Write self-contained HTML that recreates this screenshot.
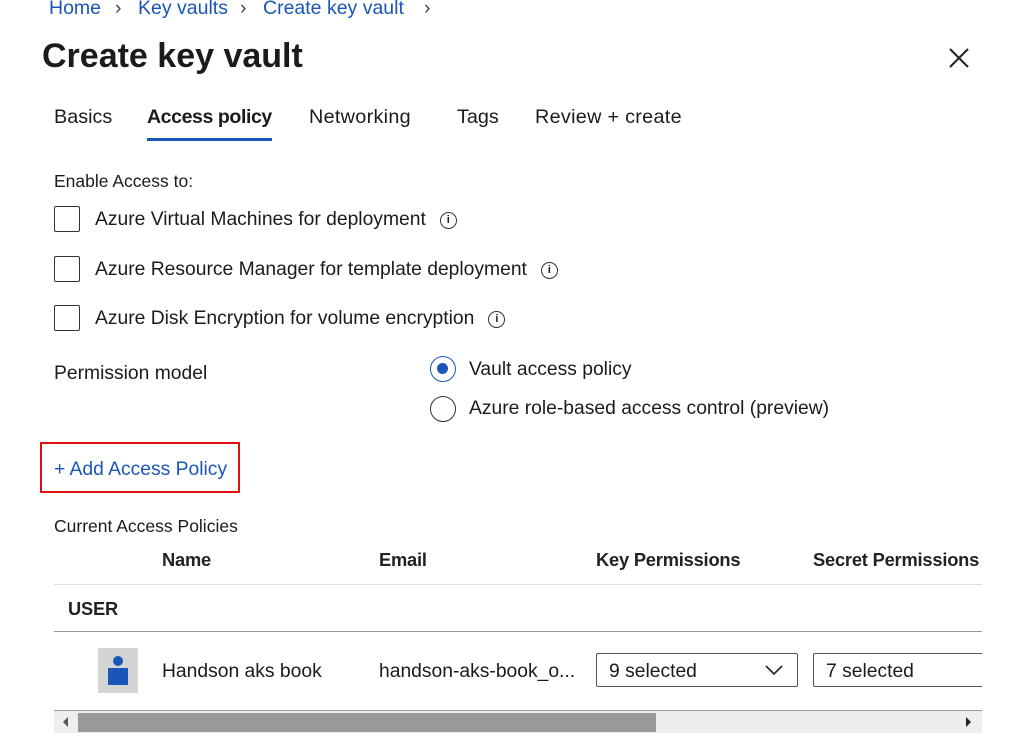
<!DOCTYPE html>
<html><head><meta charset="utf-8"><style>
body{margin:0;width:1029px;height:752px;background:#fff;font-family:"Liberation Sans",sans-serif;color:#1b1b1b;position:relative;overflow:hidden}
.a{position:absolute;white-space:nowrap}
.bc{color:#1a56b8;font-size:19.5px;top:-3px}
.cb{position:absolute;left:54px;width:26px;height:26px;border:1.5px solid #333;border-radius:2px;box-sizing:border-box}
.t{font-size:19.3px}
.tab{font-size:19.8px;top:106px}
.info{display:inline-block;vertical-align:2px;margin-left:14px;width:17px;height:17px;border:1.3px solid #333;border-radius:50%;box-sizing:border-box;font-size:11px;text-align:center;line-height:15px;font-weight:bold}
.rad{position:absolute;left:430px;width:26px;height:26px;border:1.5px solid #333;border-radius:50%;box-sizing:border-box}
.th{font-size:18.3px;font-weight:bold;color:#222;top:549px;letter-spacing:-0.2px}
.sel{position:absolute;top:653px;height:34px;border:1.3px solid #555;border-radius:2px;box-sizing:border-box;font-size:19.3px;padding:7px 0 0 12px}
</style></head><body>
<div class="a bc" style="left:49px">Home</div>
<div class="a bc" style="left:115px;color:#444">&#x203A;</div>
<div class="a bc" style="left:138px">Key vaults</div>
<div class="a bc" style="left:240px;color:#444">&#x203A;</div>
<div class="a bc" style="left:263px">Create key vault</div>
<div class="a bc" style="left:424px;color:#444">&#x203A;</div>
<div class="a" style="left:42px;top:37px;font-size:34px;font-weight:bold">Create key vault</div>
<svg class="a" style="left:949px;top:48px" width="20" height="20"><path d="M1 1L19 19M19 1L1 19" stroke="#222" stroke-width="2"/></svg>
<div class="a tab" style="left:54px">Basics</div>
<div class="a tab" style="left:147px;font-weight:bold;font-size:19.5px;letter-spacing:-0.4px">Access policy</div>
<div class="a" style="left:147px;top:138px;width:125px;height:3px;background:#1a56b8"></div>
<div class="a tab" style="left:309px;letter-spacing:0.3px">Networking</div>
<div class="a tab" style="left:457px">Tags</div>
<div class="a tab" style="left:535px;letter-spacing:0.3px">Review + create</div>
<div class="a" style="left:54px;top:171px;font-size:17.5px">Enable Access to:</div>
<div class="cb" style="top:206px"></div><div class="a t" style="left:95px;top:209px">Azure Virtual Machines for deployment<span class="info">i</span></div>
<div class="cb" style="top:256px"></div><div class="a t" style="left:95px;top:259px">Azure Resource Manager for template deployment<span class="info">i</span></div>
<div class="cb" style="top:305px"></div><div class="a t" style="left:95px;top:308px">Azure Disk Encryption for volume encryption<span class="info">i</span></div>
<div class="a t" style="left:54px;top:363px">Permission model</div>
<div class="rad" style="top:356px;border-color:#1a56b8"><div style="position:absolute;left:6px;top:6px;width:11px;height:11px;border-radius:50%;background:#1a56b8"></div></div>
<div class="a t" style="left:469px;top:359px">Vault access policy</div>
<div class="rad" style="top:396px"></div>
<div class="a t" style="left:469px;top:398px">Azure role-based access control (preview)</div>
<div class="a" style="left:40px;top:442px;width:200px;height:51px;border:2px solid #e01010;box-sizing:border-box"></div>
<div class="a t" style="left:54px;top:459px;color:#1a56b8">+ Add Access Policy</div>
<div class="a" style="left:54px;top:516px;font-size:17.5px">Current Access Policies</div>
<div class="a th" style="left:162px">Name</div>
<div class="a th" style="left:379px">Email</div>
<div class="a th" style="left:596px">Key Permissions</div>
<div class="a th" style="left:813px">Secret Permissions</div>
<div class="a" style="left:54px;top:584px;width:928px;height:1px;background:#ddd"></div>
<div class="a th" style="left:68px;top:598px">USER</div>
<div class="a" style="left:54px;top:631px;width:928px;height:1px;background:#999"></div>
<div class="a" style="left:98px;top:648px;width:40px;height:45px;background:#d4d4d4"><div style="position:absolute;left:15px;top:8px;width:10px;height:10px;border-radius:50%;background:#1a56b8"></div><div style="position:absolute;left:10px;top:20px;width:20px;height:17px;background:#1a56b8"></div></div>
<div class="a t" style="left:162px;top:661px">Handson aks book</div>
<div class="a t" style="left:379px;top:661px">handson-aks-book_o...</div>
<div class="sel" style="left:596px;width:202px">9 selected<svg style="position:absolute;right:14px;top:11px" width="18" height="10"><path d="M1 1L9 9L17 1" stroke="#222" stroke-width="1.6" fill="none"/></svg></div>
<div class="a" style="left:813px;top:653px;width:169px;height:34px;overflow:hidden"><div class="sel" style="left:0;top:0;width:180px">7 selected</div></div>
<div class="a" style="left:54px;top:710px;width:928px;height:1px;background:#999"></div>
<div class="a" style="left:54px;top:711px;width:928px;height:22px;background:#eee"></div>
<div class="a" style="left:78px;top:713px;width:578px;height:19px;background:#999"></div>
<div class="a" style="left:63px;top:717px;width:0;height:0;border-top:5px solid transparent;border-bottom:5px solid transparent;border-right:5px solid #555"></div>
<div class="a" style="left:966px;top:717px;width:0;height:0;border-top:5px solid transparent;border-bottom:5px solid transparent;border-left:5px solid #222"></div>
</body></html>
